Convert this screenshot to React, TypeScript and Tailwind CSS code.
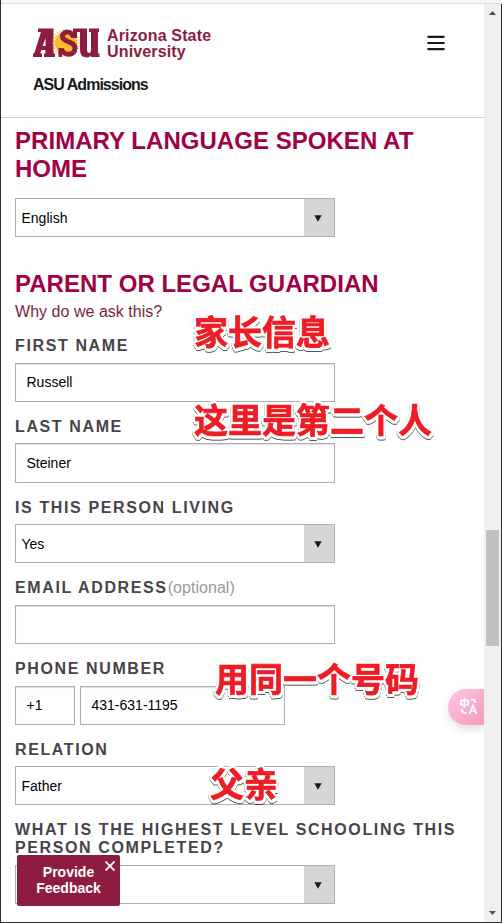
import React from "react";

const FONT = "font-['Liberation_Sans',Arial,sans-serif]";

function Note({ children, className }: { children: React.ReactNode; className: string }) {
  return (
    <div
      className={`absolute whitespace-nowrap font-['Noto_Sans_CJK_SC',sans-serif] text-[34px] font-bold leading-[40px] text-[#ee1c25] [-webkit-text-stroke:0.7px_#ee1c25] [filter:drop-shadow(1.5px_0_0_white)_drop-shadow(-1.5px_0_0_white)_drop-shadow(0_1.5px_0_white)_drop-shadow(0_-1.5px_0_white)_drop-shadow(1px_2px_0_white)_drop-shadow(0.5px_1px_0.5px_rgba(0,0,0,0.65))] ${className}`}
    >
      {children}
    </div>
  );
}

function Select({ value }: { value: string }) {
  return (
    <div className="flex h-[39px] w-[320px] border border-[#b0b0b0] bg-white text-sm text-black">
      <span className="flex flex-1 items-center pl-[5.5px]">{value}</span>
      <span className="flex w-[30px] items-center justify-center bg-[#d6d6d6] pr-[2px] pt-[2px]">
        <svg width="8" height="7" viewBox="0 0 8 7">
          <path d="M0.3 0.3H7.7L4 6.8Z" fill="#1a1a1a" />
        </svg>
      </span>
    </div>
  );
}

function Input({ value = "", className = "h-[39px] w-[320px]" }: { value?: string; className?: string }) {
  return (
    <div
      className={`flex items-center border border-[#b0b0b0] bg-white pb-px pl-[10.5px] text-sm text-black shadow-[inset_0_1px_1px_#ddd] ${className}`}
    >
      {value}
    </div>
  );
}

function Field({
  label,
  optional = false,
  className = "h-[81px]",
  labelClass = "pt-px",
  children,
}: {
  label: string;
  optional?: boolean;
  className?: string;
  labelClass?: string;
  children: React.ReactNode;
}) {
  return (
    <div className={className}>
      <div className={`h-[27px] text-base leading-[18px] text-[#484349] ${labelClass}`}>
        <span className="font-bold tracking-[1.62px]">{label}</span>
        {optional && <span className="tracking-[0.05px] text-[#999]">(optional)</span>}
      </div>
      {children}
    </div>
  );
}

function Logo() {
  const rays = Array.from({ length: 28 }, (_, i) => (i * 360) / 28);
  return (
    <div className="flex h-[33px]">
      <svg width="68" height="33" viewBox="0 0 68 33">
        <g fill="#8c1d40">
          <path fillRule="evenodd" d="M5 0.500H20.500V25.500H22V29H11V25.500H12.500V22H8.500L7.200 25.500H9V29H0V25.500H1.200L8 4H5ZM12.500 10L9.700 18H12.500Z" />
          <path d="M44 0.500H54V21Q54 25 56 25Q58 25 58 21V4H56V0.500H66V4H65V25.500H66.500V29H58V27.500Q56.500 29.500 54 29.500Q47 29.500 47 22V4H44Z" />
        </g>
        <g stroke="#ffb92a" strokeWidth="1">
          {rays.map((a) => (
            <line key={a} x1="33" y1="15" x2="33" y2="1" transform={`rotate(${a} 33 15)`} />
          ))}
        </g>
        <circle cx="33" cy="15" r="11" fill="#ffb92a" />
        <path d="M40.500 9.500C39 2.500 29.500 2.500 29.500 8.500C29.500 14.500 42 13 42 20C42 28 30.500 28.500 28.500 20.500" fill="none" stroke="#8c1d40" strokeWidth="5" />
        <path d="M40 0.500H44V10H40ZM25.500 20H29V29H25.500Z" fill="#8c1d40" />
      </svg>
      <div className="ml-[6px] text-[16px] font-bold leading-[16px] tracking-[0.15px] text-[#8c1d40]">
        Arizona State
        <br />
        University
      </div>
    </div>
  );
}

export default function App() {
  return (
    <div className={`relative flex h-[923px] w-[502px] flex-col overflow-hidden border-b border-l border-[#302d2d] bg-white ${FONT}`}>
      <div className="h-[4px] shrink-0 border-b border-[#dddbe2] bg-[#fdf2fe]" />
      <div className="flex min-h-0 flex-1">
        <div className="w-[483px] shrink-0">
          <header className="flex h-[114px] justify-between border-b border-[#cfcfcf] pl-[32px] pr-[39px]">
            <div>
              <div className="pt-[24px]"><Logo /></div>
              <div className="mt-[14px] text-base font-bold leading-5 tracking-[-0.97px] text-[#191919]">ASU Admissions</div>
            </div>
            <svg className="mt-[30px]" width="18" height="18" viewBox="0 0 18 18" stroke="#191919" strokeWidth="2.200" strokeLinecap="round">
              <path d="M1.300 2.800H16.700M1.300 9H16.700M1.300 15.200H16.700" />
            </svg>
          </header>
          <main className="pl-[14px] pt-[9px]">
            <h2 className="mb-[15px] text-2xl font-bold leading-7 tracking-[0.04px] text-[#a00045]">
              PRIMARY LANGUAGE SPOKEN AT<br />HOME
            </h2>
            <Select value="English" />
            <h2 className="mt-[33px] text-2xl font-bold leading-7 tracking-[0.02px] text-[#a00045]">PARENT OR LEGAL GUARDIAN</h2>
            <div className="mb-[15px] mt-[4px] h-[19px] text-base leading-[19px] tracking-[0.03px] text-[#7d1f3d]">Why do we ask this?</div>
            <Field label="FIRST NAME" className="h-[80px]"><Input value="Russell" /></Field>
            <Field label="LAST NAME" labelClass="pt-[2px]"><Input value="Steiner" className="h-[40px] w-[320px]" /></Field>
            <Field label="IS THIS PERSON LIVING" labelClass="pt-[2px]"><Select value="Yes" /></Field>
            <Field label="EMAIL ADDRESS" optional><Input /></Field>
            <Field label="PHONE NUMBER" className="h-[80px]">
              <div className="flex gap-[5px]">
                <Input value="+1" className="h-[39px] w-[60px]" />
                <Input value="431-631-1195" className="h-[39px] w-[205px]" />
              </div>
            </Field>
            <Field label="RELATION" labelClass="pt-[2px]"><Select value="Father" /></Field>
            <div className="mb-[8px] pt-px text-base font-bold leading-[18px] tracking-[1.62px] text-[#484349]">
              WHAT IS THE HIGHEST LEVEL SCHOOLING THIS<br />PERSON COMPLETED?
            </div>
            <Select value="" />
          </main>
        </div>
        <aside className="flex w-[17px] shrink-0 flex-col items-center bg-[#f0f0f0]">
          <svg className="mt-[7px]" width="7" height="4" viewBox="0 0 7 4"><path d="M0 4L3.500 0L7 4Z" fill="#505050" /></svg>
          <div className="mt-[515px] h-[116px] w-[13px] bg-[#c1c1c1]" />
          <svg className="mb-[7px] mt-auto" width="7" height="4" viewBox="0 0 7 4"><path d="M0 0H7L3.500 4Z" fill="#505050" /></svg>
        </aside>
        <div className="w-px bg-[#302d2d]" />
      </div>

      <div className="absolute left-[447px] top-[689px] h-[36px] w-[36px] rounded-l-full bg-linear-to-br from-[#ffc8df] to-[#f29abf] shadow-[0_4px_8px_rgba(0,0,0,0.12)] [clip-path:inset(-12px_0_-16px_-12px)]">
        <svg className="ml-[12px] mt-[9px]" width="18" height="17" viewBox="0 0 18 17" fill="none" stroke="white" strokeWidth="1.700">
          <path d="M1 2.500H8V7H1ZM4.500 0V10M11 1.500H13Q15 1.500 15 4V5M2 11V12Q2 15 5 15H6.500M9.500 16L13 7.500L16.500 16M10.700 13H15.300" />
        </svg>
      </div>

      <div className="absolute left-[16px] top-[855px] h-[51px] w-[103px] rounded-[2px] bg-[#8c1d40] pt-[9px] text-center text-sm font-bold leading-4 text-white">
        Provide<br />Feedback
        <svg className="absolute right-[5px] top-[6px]" width="10" height="10" viewBox="0 0 10 10" stroke="white" strokeWidth="1.800">
          <path d="M0.500 0.500L9.500 9.500M9.500 0.500L0.500 9.500" />
        </svg>
      </div>

      <Note className="left-[193px] top-[311px]">家长信息</Note>
      <Note className="left-[193px] top-[399px]">这里是第二个人</Note>
      <Note className="left-[214px] top-[658px]">用同一个号码</Note>
      <Note className="left-[209px] top-[763px]">父亲</Note>
    </div>
  );
}
